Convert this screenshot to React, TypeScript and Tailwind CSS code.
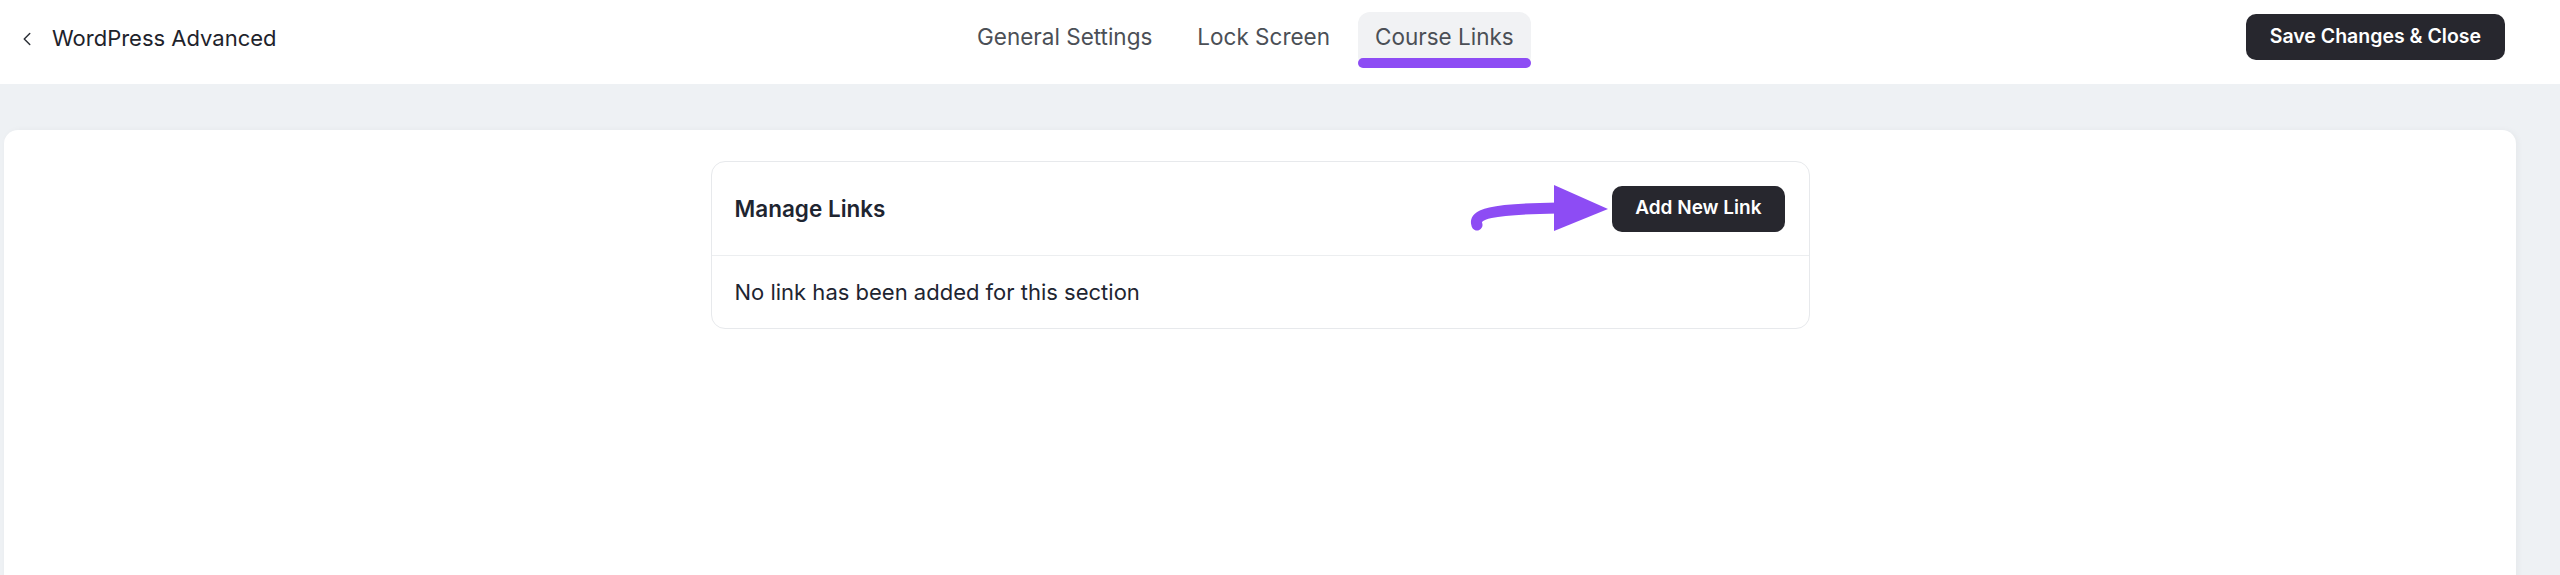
import { ChevronLeft } from "lucide-react";

const tabs = [
  { id: "general", label: "General Settings" },
  { id: "lock", label: "Lock Screen" },
  { id: "links", label: "Course Links" },
];

const CurvedArrow = () => (
  <svg width="142" height="50" viewBox="0 0 142 50" className="shrink-0">
    <path
      d="M9 41 C5 30 22 25 90 24"
      fill="none"
      stroke="#8d4cf4"
      strokeWidth="11"
      strokeLinecap="round"
    />
    <path d="M86 1 L140 25 L86 47 Z" fill="#8d4cf4" />
  </svg>
);

export default function App() {
  const active = "links";

  return (
    <div className="min-h-screen bg-[#eef1f4] font-['Inter',sans-serif]">
      <header className="flex h-[84px] items-start bg-white">
        <div className="flex w-[960px] items-center pl-[16px] pt-[22px]">
          <ChevronLeft className="h-[22px] w-[22px] text-[#2b2f36]" strokeWidth={1.6} />
          <span className="ml-[14px] text-[22px] text-[#1e232b]">WordPress Advanced</span>
        </div>

        <nav className="mt-[12px] flex gap-[11px]">
          {tabs.map((tab) => (
            <button
              key={tab.id}
              className={`relative flex h-[56px] items-center rounded-[12px] px-[17px] pb-[6px] text-[22.5px] text-[#4b4f56] ${
                tab.id === active ? "bg-[#f1f2f4]" : ""
              }`}
            >
              {tab.label}
              {tab.id === active && (
                <span className="absolute inset-x-0 bottom-0 h-[10px] rounded-full bg-[#8d4cf4]" />
              )}
            </button>
          ))}
        </nav>

        <button className="ml-auto mr-[55px] mt-[14px] h-[46px] rounded-[10px] bg-[#27272e] px-[24px] text-[19.5px] font-semibold text-white">
          Save Changes &amp; Close
        </button>
      </header>

      <main className="ml-[4px] mr-[44px] mt-[46px] min-h-[460px] rounded-[14px] bg-white pt-[31px] shadow-[2px_0_6px_rgba(0,0,0,0.04)]">
        <section className="mx-auto w-[1099px] rounded-[14px] border border-[#e7e9ec]">
          <div className="flex h-[94px] items-center justify-between border-b border-[#eceef0] pl-[23px] pr-[24px]">
            <h2 className="text-[22.5px] font-semibold text-[#1e2531]">Manage Links</h2>
            <div className="flex items-center">
              <CurvedArrow />
              <button className="ml-[2px] h-[46px] rounded-[10px] bg-[#27272e] px-[23px] text-[19px] font-semibold text-white">
                Add New Link
              </button>
            </div>
          </div>
          <div className="flex h-[72px] items-center pl-[23px] text-[22px] text-[#1e2531]">
            No link has been added for this section
          </div>
        </section>
      </main>
    </div>
  );
}
